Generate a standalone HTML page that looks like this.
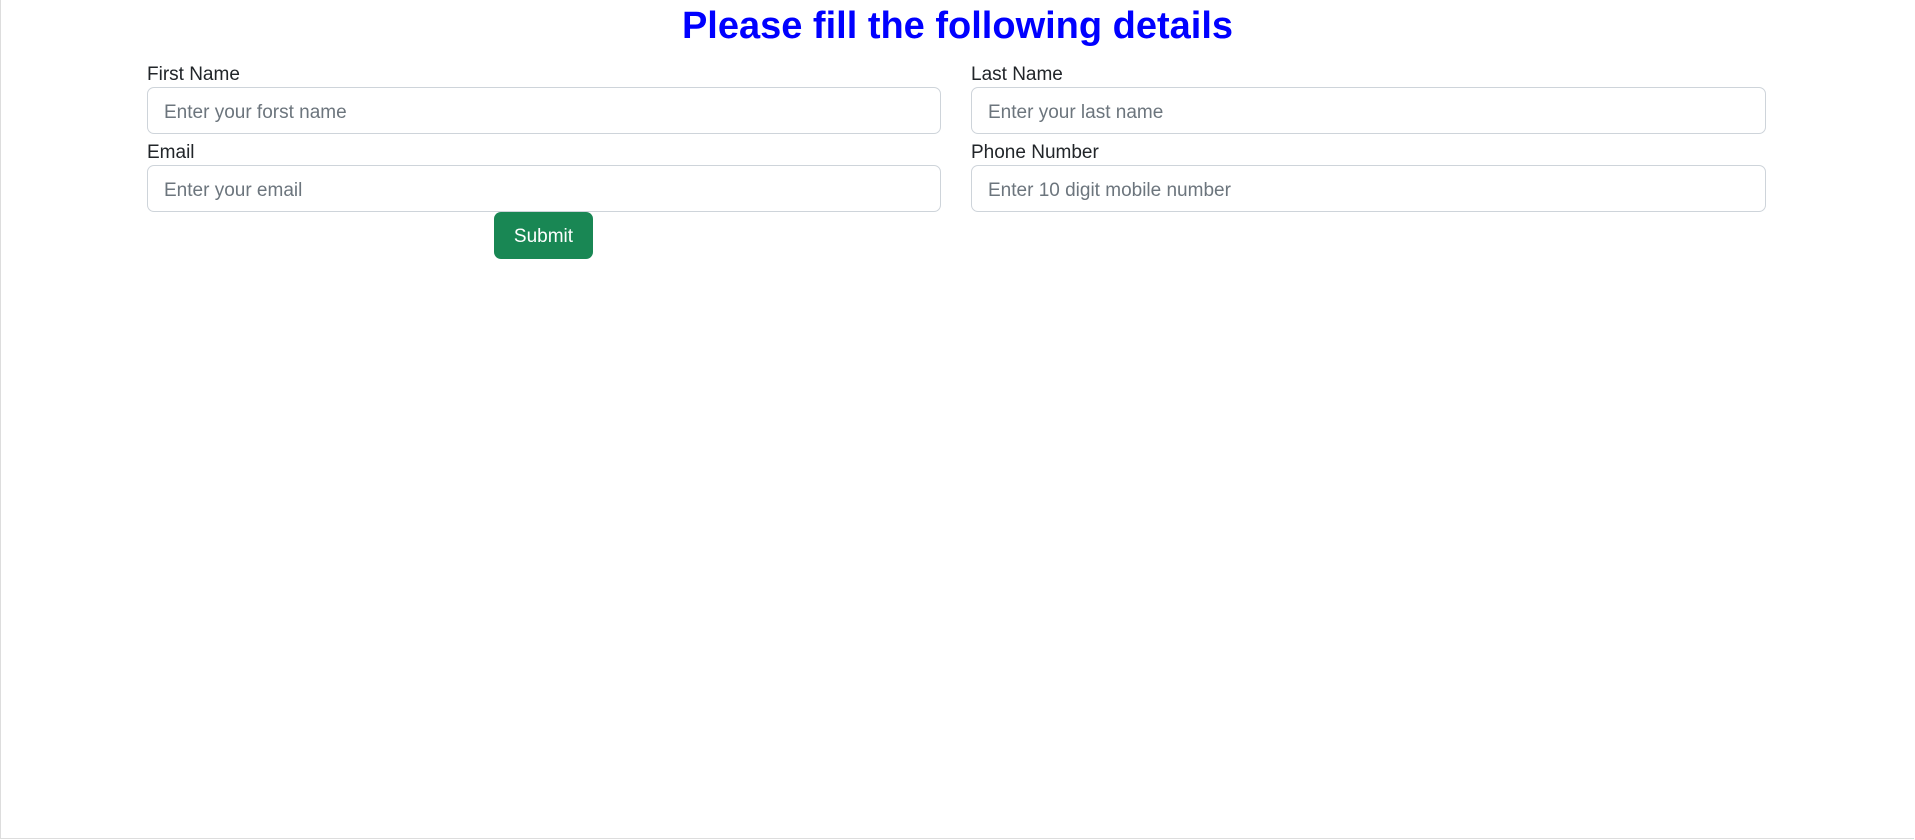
<!DOCTYPE html>
<html><head><meta charset="utf-8"><style>
html,body{margin:0;padding:0;width:1915px;height:840px;overflow:hidden;background:#fff;font-family:"Liberation Sans",sans-serif;}
.frame{position:absolute;left:0;top:0;width:1914px;height:839px;border-left:1px solid #ddd;border-bottom:1px solid #ddd;box-sizing:border-box;}
h1{position:absolute;top:1px;left:0;width:1915px;text-align:center;margin:0;font-size:38px;line-height:50px;color:#0000ff;font-weight:bold;}
label{position:absolute;font-size:19px;color:#212529;line-height:24px;}
.in{position:absolute;height:47px;border:1px solid #ced4da;border-radius:7px;box-sizing:border-box;font-size:19px;color:#6c757d;padding-left:16px;line-height:49px;}
.btn{position:absolute;left:494px;top:212px;width:99px;height:47px;background:#198754;color:#fff;border-radius:7px;font-size:19px;line-height:50px;text-align:center;}
</style></head><body>
<div class="frame"></div>
<h1>Please fill the following details</h1>
<label style="left:147px;top:63px">First Name</label>
<div class="in" style="left:147px;top:87px;width:794px">Enter your forst name</div>
<label style="left:971px;top:63px">Last Name</label>
<div class="in" style="left:971px;top:87px;width:795px">Enter your last name</div>
<label style="left:147px;top:141px">Email</label>
<div class="in" style="left:147px;top:165px;width:794px">Enter your email</div>
<label style="left:971px;top:141px">Phone Number</label>
<div class="in" style="left:971px;top:165px;width:795px">Enter 10 digit mobile number</div>
<div class="btn">Submit</div>
</body></html>
